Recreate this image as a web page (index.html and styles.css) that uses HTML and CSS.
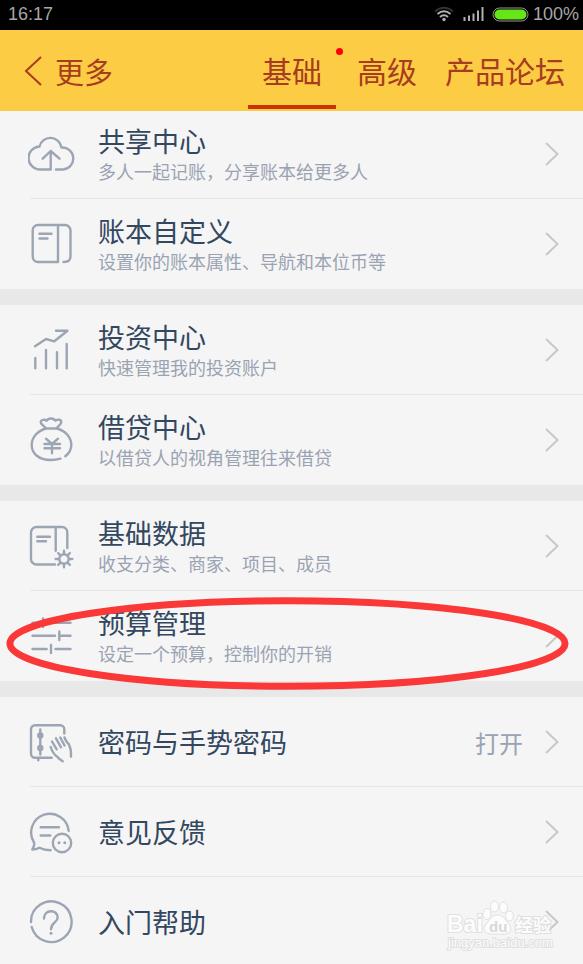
FILE: index.html
```html
<!DOCTYPE html>
<html lang="zh-CN">
<head>
<meta charset="utf-8">
<meta name="viewport" content="width=device-width, initial-scale=1">
<title>更多</title>
<link rel="stylesheet" href="styles.css">
</head>
<body>
<div class="app">
  <div class="status">
    <span class="status-time">16:17</span>
    <div class="status-right">
      <svg class="wifi" viewBox="0 0 20 16" aria-hidden="true">
        <path class="dim" d="M1 5.500Q10 -2 19 5.500"/>
        <path d="M3.500 8Q10 2.500 16.500 8M6 11Q10 7.500 14 11"/>
        <circle cx="10" cy="13.500" r="1.700"/>
      </svg>
      <svg class="signal" viewBox="0 0 21 14" aria-hidden="true">
        <path d="M1.500 14V10M6 14V8.500M10.500 14V6.500M15 14V3.500M19.500 14V0"/>
      </svg>
      <svg class="battery" viewBox="0 0 37 15" aria-hidden="true">
        <rect class="shell" x="1" y="1" width="35" height="13" rx="6.500"/>
        <rect class="charge" x="2.500" y="2.500" width="32" height="10" rx="5"/>
      </svg>
      <span>100%</span>
    </div>
  </div>

  <header class="header">
    <button class="back" type="button">
      <svg viewBox="0 0 18 30" aria-hidden="true"><path d="M17 1L2 15L17 29"/></svg>
      <span>更多</span>
    </button>
    <nav class="tabs">
      <a class="tab active" href="#basic">基础<i class="dot"></i></a>
      <a class="tab" href="#advanced">高级</a>
      <a class="tab" href="#forum">产品论坛</a>
    </nav>
  </header>

  <main class="groups">
    <ul class="group">
      <li class="item"><a class="row" href="#share">
        <svg class="icon" viewBox="0 0 48 48" aria-hidden="true"><path d="M22.700 21V39.500H12.500A11.500 11.500 0 0 1 11.500 16.500A11.200 11.200 0 0 1 33.500 17.500A11 11 0 1 1 35 39.500H28M14.700 28.700L22.700 21L31.500 28.700"/></svg>
        <span class="text"><span class="name">共享中心</span><span class="desc">多人一起记账，分享账本给更多人</span></span>
        <svg class="chevron" viewBox="0 0 14 24" aria-hidden="true"><path d="M1 1L12.500 12L1 23"/></svg>
      </a></li>
      <li class="item"><a class="row" href="#book">
        <svg class="icon" viewBox="0 0 48 48" aria-hidden="true"><path d="M30 5V42H10A5.500 5.500 0 0 1 4.700 36.500V10.500A5.500 5.500 0 0 1 10 5H37A5.500 5.500 0 0 1 42.500 10.500V36.500Q42.500 42 35.500 42M11.500 13.700H23.500M11.500 18.500H19.500"/></svg>
        <span class="text"><span class="name">账本自定义</span><span class="desc">设置你的账本属性、导航和本位币等</span></span>
        <svg class="chevron" viewBox="0 0 14 24" aria-hidden="true"><path d="M1 1L12.500 12L1 23"/></svg>
      </a></li>
    </ul>

    <ul class="group">
      <li class="item"><a class="row" href="#invest">
        <svg class="icon" viewBox="0 0 48 48" aria-hidden="true"><path d="M7 20.300L18 13L26.300 15.300L39.500 4.800H28M7.300 32V42.300M18 24V42.300M29 26.300V42.300M38.700 18V42.300"/></svg>
        <span class="text"><span class="name">投资中心</span><span class="desc">快速管理我的投资账户</span></span>
        <svg class="chevron" viewBox="0 0 14 24" aria-hidden="true"><path d="M1 1L12.500 12L1 23"/></svg>
      </a></li>
      <li class="item"><a class="row" href="#loan">
        <svg class="icon" viewBox="0 0 48 48" aria-hidden="true"><path d="M32.500 42.700Q27.500 44 23 44C10 44 3.700 37 3.700 29C3.700 21 10 14.500 18 12.500H29C37 14.500 43.300 21 43.300 29Q43.300 35.500 37.300 40.300M18 12.300C16 10 12.700 8.500 12.700 6C13 3.500 16.500 3.300 18.700 4.600C20 2 25.500 1.500 27.300 4.600C30 3 33.300 3.500 33.300 6C33.300 8.500 30 10 28.700 12.300M18 22.700L24 28L30 22.700M24 28V37.300M16.500 28H32M16.500 32.300H32"/></svg>
        <span class="text"><span class="name">借贷中心</span><span class="desc">以借贷人的视角管理往来借贷</span></span>
        <svg class="chevron" viewBox="0 0 14 24" aria-hidden="true"><path d="M1 1L12.500 12L1 23"/></svg>
      </a></li>
    </ul>

    <ul class="group">
      <li class="item"><a class="row" href="#data">
        <svg class="icon" viewBox="0 0 48 48" aria-hidden="true"><path d="M27 42.500H8.500A5.500 5.500 0 0 1 3 37V10.500A5.500 5.500 0 0 1 8.500 5H34A5.500 5.500 0 0 1 39.300 10.500V26M27.700 5V28.700M9.300 14.700H22M9.300 19.300H18"/><circle cx="36" cy="37" r="4.700"/><path d="M36 32V28.700M36 42V45.300M31 37H27.700M41 37H44.300M32.500 33.500L30.200 31.200M39.500 33.500L41.800 31.200M32.500 40.500L30.200 42.800M39.500 40.500L41.800 42.800"/></svg>
        <span class="text"><span class="name">基础数据</span><span class="desc">收支分类、商家、项目、成员</span></span>
        <svg class="chevron" viewBox="0 0 14 24" aria-hidden="true"><path d="M1 1L12.500 12L1 23"/></svg>
      </a></li>
      <li class="item"><a class="row" href="#budget">
        <svg class="icon" viewBox="0 0 48 48" aria-hidden="true"><path d="M4.500 10.700H11M15 6.500V15M19 10.700H42.500M4.500 23.700H27M31.300 19.500V28M31.300 23.700H42.500M4.500 37H18.700M23 33V41M27.500 37H42.500"/></svg>
        <span class="text"><span class="name">预算管理</span><span class="desc">设定一个预算，控制你的开销</span></span>
        <svg class="chevron" viewBox="0 0 14 24" aria-hidden="true"><path d="M1 1L12.500 12L1 23"/></svg>
      </a>
      <svg class="marker" aria-hidden="true"><ellipse cx="50%" cy="50%" rx="49.300%" ry="46%"/></svg></li>
    </ul>

    <ul class="group">
      <li class="item"><a class="row" href="#password">
        <svg class="icon" viewBox="0 0 48 48" aria-hidden="true"><path d="M23.700 39.700H7A4 4 0 0 1 3 35.700V11.300A4 4 0 0 1 7 7.300H32.300A4 4 0 0 1 36.300 11.300V15.500M10.300 40V42.300M12.300 11.500V36.500M22.700 29Q25 36 29 38.500Q31 41 34.700 43.300M24 23.500L28.700 31.300M28 20.300L33 29.300M32.300 19.500L36.500 27.500M36.500 19.500Q38 24 41 26.500Q43.500 32 43 38.700"/><circle class="solid" cx="12.300" cy="17.500" r="2"/><circle class="solid" cx="12.300" cy="30" r="2"/></svg>
        <span class="text"><span class="name">密码与手势密码</span></span>
        <span class="value">打开</span>
        <svg class="chevron" viewBox="0 0 14 24" aria-hidden="true"><path d="M1 1L12.500 12L1 23"/></svg>
      </a></li>
      <li class="item"><a class="row" href="#feedback">
        <svg class="icon" viewBox="0 0 48 48" aria-hidden="true"><path d="M40.700 23A18.800 18.800 0 1 0 6 34.500Q7 37 4.300 41.500Q8 41.500 11.500 39.700Q16 42 22.700 42.300M12.700 19.300H31M12.700 27.500H22.300"/><circle cx="34" cy="35" r="9.200"/><circle class="solid tiny" cx="31" cy="34.700" r="1.500"/><circle class="solid tiny" cx="36.800" cy="34.700" r="1.500"/></svg>
        <span class="text"><span class="name">意见反馈</span></span>
        <svg class="chevron" viewBox="0 0 14 24" aria-hidden="true"><path d="M1 1L12.500 12L1 23"/></svg>
      </a></li>
      <li class="item"><a class="row" href="#help">
        <svg class="icon" viewBox="0 0 48 48" aria-hidden="true"><path d="M3 24.300A20.300 20.300 0 1 1 3.700 29M16 20.500C16 11 29.700 11 29.700 19.500C29.700 24.500 23 24.500 23 31.300"/><circle class="solid tiny" cx="23" cy="35.300" r="1.500"/></svg>
        <span class="text"><span class="name">入门帮助</span></span>
        <svg class="chevron" viewBox="0 0 14 24" aria-hidden="true"><path d="M1 1L12.500 12L1 23"/></svg>
      </a>
      <svg class="watermark" viewBox="0 0 110 54" aria-hidden="true">
        <text class="wm-brand" x="1" y="33">Bai</text>
        <path d="M51.500 16C58 16 59 21 63 25C68 33 62 36 51.500 35C41 36 35 33 40 25C44 21 45 16 51.500 16Z"/>
        <ellipse cx="41" cy="15" rx="4" ry="5.500"/><ellipse cx="48.500" cy="7.500" rx="4" ry="5.500"/><ellipse cx="57.500" cy="8.500" rx="4" ry="5.500"/><ellipse cx="63.500" cy="17" rx="4" ry="5"/>
        <text class="wm-du" x="43" y="33">du</text>
        <text class="wm-cn" x="69" y="33">经验</text>
        <text class="wm-url" x="2" y="48">jingyan.baidu.com</text>
      </svg></li>
    </ul>
  </main>
</div>
</body>
</html>
```
FILE: styles.css
```css
* { box-sizing: border-box; }

body {
  margin: 0;
  background: #f5f5f5;
  color: #33475f;
  font-family: "Noto Sans CJK SC", sans-serif;
  font-weight: 400;
}

a { color: inherit; text-decoration: none; }

.app {
  display: flex;
  flex-direction: column;
  height: 100vh;
  overflow: hidden;
}

.status {
  display: flex;
  flex: none;
  align-items: center;
  justify-content: space-between;
  height: 30px;
  padding: 0 4px 2px 8px;
  background: #000;
  color: #a6a6a6;
  font: 18px/28px "Liberation Sans", sans-serif;
}

.status-right { display: flex; align-items: center; }
.status-right svg { flex: none; fill: none; stroke: #b0b0b0; stroke-width: 2; }

.wifi { width: 20px; height: 16px; margin-right: 9px; }
.status-right .wifi circle { fill: #b0b0b0; stroke: none; }
.status-right .wifi .dim { stroke: #333; }
.signal { width: 21px; height: 14px; margin-right: 8px; }
.battery { width: 37px; height: 15px; margin-right: 4px; }
.status-right .battery .shell { stroke: #999; stroke-width: 1; }
.status-right .battery .charge { fill: #66e619; stroke: none; }

.header {
  position: relative;
  z-index: 1;
  display: flex;
  flex: none;
  justify-content: space-between;
  height: 81px;
  padding: 0 4px 0 24px;
  background: #fccc45;
  color: #a83c1e;
}

.back {
  display: flex;
  align-items: center;
  gap: 13px;
  padding: 0;
  border: 0;
  background: none;
  color: inherit;
  font: inherit;
  font-size: 29px;
}

.back svg { width: 18px; height: 30px; fill: none; stroke: currentColor; stroke-width: 2; }

.tabs { display: flex; }

.tab {
  position: relative;
  padding: 0 14px;
  font-size: 30px;
  line-height: 81px;
}

.tab.active { margin-right: 7px; }

.tab.active::after {
  content: "";
  position: absolute;
  right: 0;
  bottom: 2px;
  left: 0;
  height: 4px;
  background: #cc3300;
}

.dot {
  position: absolute;
  top: 18px;
  right: -7px;
  width: 7px;
  height: 7px;
  border-radius: 50%;
  background: #f00;
}

.groups {
  display: flex;
  flex-direction: column;
  gap: 16px;
  margin-top: -2px;
  background: #e8e8e8;
}

.group {
  margin: 0;
  padding: 0;
  background: #f5f5f5;
  list-style: none;
}

.item { position: relative; }

.item + .item::before {
  content: "";
  position: absolute;
  top: -1px;
  right: 0;
  left: 30px;
  height: 1px;
  background: #e6e6e6;
}

.row {
  display: flex;
  align-items: center;
  height: 90px;
  padding: 0 24px 0 28px;
}

.icon {
  flex: none;
  width: 48px;
  height: 48px;
  margin-right: 22px;
  fill: none;
  stroke: #9ca5b4;
  stroke-width: 2.4;
  stroke-linecap: round;
  stroke-linejoin: round;
}

.icon .solid { fill: #9ca5b4; }
.icon .tiny { stroke: none; }

.text { display: flex; flex: 1; flex-direction: column; }
.name { font-size: 27px; line-height: 34px; }
.desc { color: #9aa3b2; font-size: 18px; line-height: 26px; }
.value { margin-right: 22px; color: #9aa3b2; font-size: 24px; }

.chevron {
  flex: none;
  width: 14px;
  height: 24px;
  fill: none;
  stroke: #c8c8c8;
  stroke-width: 2;
}

.marker {
  position: absolute;
  top: 6px;
  left: 6px;
  width: calc(100% - 20px);
  height: 93px;
  fill: none;
  stroke: #fb3838;
  stroke-width: 7;
  pointer-events: none;
}

.watermark {
  position: absolute;
  top: 22px;
  right: 27px;
  width: 110px;
  height: 54px;
  fill: #fcfcfc;
  stroke: #e0e0e0;
  stroke-width: 1;
  font-family: "Liberation Sans", "Noto Sans CJK SC", sans-serif;
  font-weight: 700;
  pointer-events: none;
}

.watermark text { paint-order: stroke; stroke-width: 2; }
.wm-brand { font-size: 23px; }
.watermark .wm-du { fill: #d8d8d8; stroke: none; font-size: 15px; }
.wm-cn { font-size: 18px; }
.wm-url { font-size: 13px; font-weight: 400; }
```
